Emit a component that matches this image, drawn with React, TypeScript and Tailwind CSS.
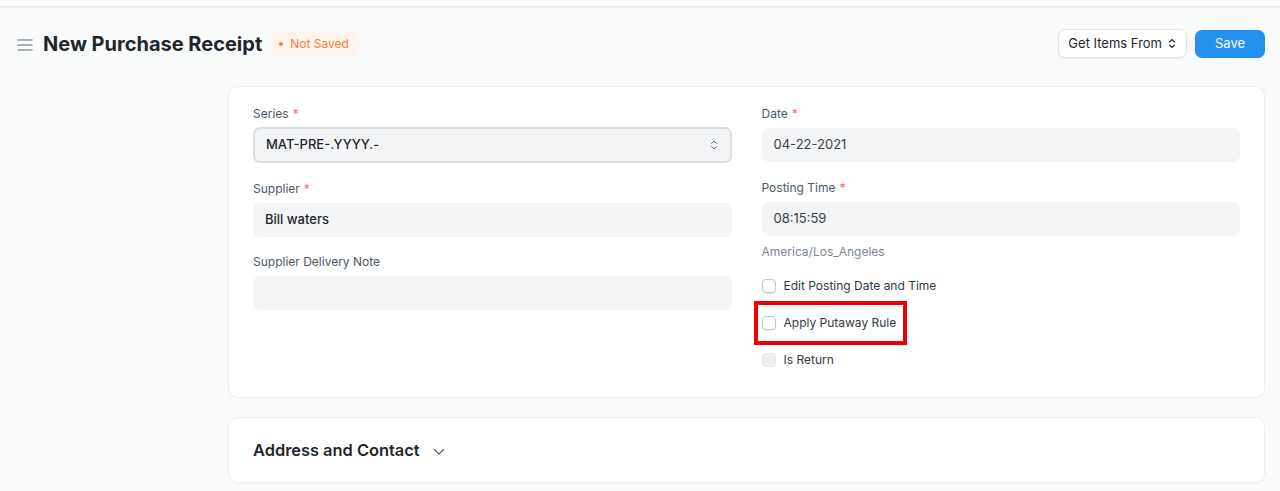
import React from 'react';

const Label: React.FC<{ text: string; required?: boolean }> = ({ text, required }) => (
  <div className="h-[18px] text-[12px] leading-[18px] text-[#4c5a67]">
    {text}
    {required && <span className="ml-[4px] text-[#f56b6b]">*</span>}
  </div>
);

const Input: React.FC<{ value?: string; bg?: string }> = ({ value, bg = 'bg-[#f3f4f6]' }) => (
  <div className={`mt-[5px] flex h-[34px] items-center rounded-[7px] px-[12px] text-[13px] font-medium text-[#1f272e] ${bg}`}>
    {value}
  </div>
);

const Check: React.FC<{ text: string; disabled?: boolean }> = ({ text, disabled }) => (
  <div className="flex h-[18px] items-center gap-[8px]">
    <span
      className={`h-[14px] w-[14px] rounded-[4px] border ${
        disabled ? 'border-[#e2e6e9] bg-[#eef0f2]' : 'border-[#c0c6cc] bg-white shadow-[0_1px_1px_rgba(0,0,0,0.08)]'
      }`}
    />
    <span className="text-[12px] text-[#333c44]">{text}</span>
  </div>
);

export default function App() {
  return (
    <div className="min-h-[491px] bg-[#f9fafa] font-['Inter',sans-serif] text-[#1f272e]">
      <div className="h-[6px] bg-white shadow-[0_1px_2px_rgba(0,0,0,0.08)]" />

      {/* page head */}
      <div className="flex h-[80px] items-center pl-[17px] pr-[15px] pb-[5px]">
        <svg width="16" height="12" viewBox="0 0 16 12" className="mr-[10px] mt-[2px]">
          <path d="M1 1h14M1 6h14M1 11h14" stroke="#8d99a6" strokeWidth="1.5" strokeLinecap="round" />
        </svg>
        <h1 className="text-[20px] font-bold leading-[24px] text-[#1f272e]">New Purchase Receipt</h1>
        <span className="ml-[9px] flex h-[24px] items-center rounded-[6px] bg-[#fff4ec] pl-[8px] pr-[10px] text-[12px] text-[#f4813f]">
          <span className="mr-[7px] h-[4px] w-[4px] rounded-full bg-[#f4813f]" />
          Not Saved
        </span>
        <div className="ml-auto flex items-center gap-[8px]">
          <button className="flex h-[29px] items-center gap-[6px] rounded-[7px] border border-[#dfe3e6] bg-white pl-[9px] pr-[10px] text-[13px] text-[#1f272e] shadow-[0_1px_2px_rgba(0,0,0,0.05)]">
            Get Items From
            <svg width="8" height="11" viewBox="0 0 8 11">
              <path d="M1.5 4L4 1.5 6.5 4M1.5 7L4 9.5 6.5 7" stroke="#1f272e" strokeWidth="1.1" fill="none" strokeLinecap="round" />
            </svg>
          </button>
          <button className="h-[28px] w-[70px] rounded-[7px] bg-[#2490ef] text-[13px] text-white">Save</button>
        </div>
      </div>

      <div className="ml-[228px] mr-[15px] flex flex-col gap-[19px]">
        {/* main section */}
        <div className="h-[312px] rounded-[10px] border border-[#eceef0] bg-white px-[24px] pt-[18px] shadow-[0_1px_2px_rgba(0,0,0,0.03)]">
          <div className="grid grid-cols-2 gap-[30px]">
            <div>
              <Label text="Series" required />
              <div className="mt-[4px] flex h-[36px] items-center justify-between rounded-[7px] border-2 border-[#dcdfe2] bg-[#f3f4f6] pl-[11px] pr-[12px] text-[13px] font-medium text-[#1f272e]">
                MAT-PRE-.YYYY.-
                <svg width="8" height="12" viewBox="0 0 8 12">
                  <path d="M1.5 4.5L4 2 6.5 4.5M1.5 7.5L4 10 6.5 7.5" stroke="#6b7480" strokeWidth="1" fill="none" strokeLinecap="round" />
                </svg>
              </div>
              <div className="mt-[17px]">
                <Label text="Supplier" required />
                <Input value="Bill waters" />
              </div>
              <div className="mt-[16px]">
                <Label text="Supplier Delivery Note" />
                <Input />
              </div>
            </div>
            <div>
              <Label text="Date" required />
              <Input value="04-22-2021" bg="bg-[#f4f5f6] !font-normal !text-[#383f46]" />
              <div className="mt-[17px]">
                <Label text="Posting Time" required />
                <Input value="08:15:59" bg="bg-[#f4f5f6] !font-normal !text-[#383f46]" />
              </div>
              <div className="mt-[8px] text-[12px] leading-[16px] text-[#7c8792]">America/Los_Angeles</div>
              <div className="mt-[17px] flex flex-col gap-[19px]">
                <Check text="Edit Posting Date and Time" />
                <div className="-mx-[8px] -my-[13px] w-fit border-4 border-[#f00000] pl-[4px] pr-[7px] py-[9px]">
                  <Check text="Apply Putaway Rule" />
                </div>
                <Check text="Is Return" disabled />
              </div>
            </div>
          </div>
        </div>

        {/* address section */}
        <div className="flex h-[66px] items-center rounded-[10px] border border-[#eceef0] bg-white px-[24px] shadow-[0_1px_2px_rgba(0,0,0,0.03)]">
          <span className="text-[16.4px] font-semibold text-[#1f272e]">Address and Contact</span>
          <svg width="12" height="8" viewBox="0 0 12 8" className="ml-[13px] mt-[3px]">
            <path d="M1.5 1.5L6 6l4.5-4.5" stroke="#4c5a67" strokeWidth="1.1" fill="none" strokeLinecap="round" />
          </svg>
        </div>
      </div>
    </div>
  );
}
